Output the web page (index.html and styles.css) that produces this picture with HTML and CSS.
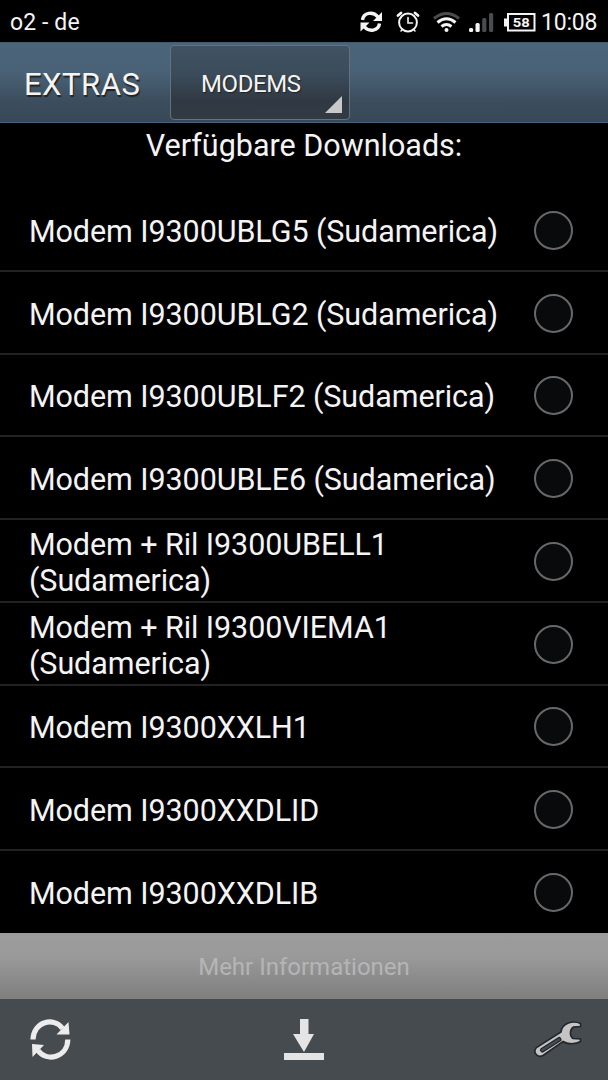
FILE: index.html
```html
<!DOCTYPE html>
<html lang="de">
<head>
    <meta charset="UTF-8">
    <meta name="viewport" content="width=device-width, initial-scale=1.0">
    <title>Extras</title>
    <link rel="stylesheet" href="styles.css">
</head>
<body>
    <div class="statusbar">
        <span class="carrier">o2 - de</span>
        <svg class="status-icons" width="178" height="42" viewBox="358 0 178 42">
            <!-- Sync -->
            <g fill="none" stroke="#f4f4f4" stroke-width="3.4">
                <path d="M362.5 20C363.5 12.5 373 11 378 17"/>
                <path d="M379.5 23.500C378.500 31 369 32.500 364 26.500"/>
            </g>
            <path d="M382 12V21H373zM360.500 31.500V22.500H369.500z" fill="#f4f4f4"/>
            <!-- Alarm -->
            <g fill="none" stroke="#f4f4f4" stroke-linecap="round">
                <circle cx="408" cy="22.500" r="8.900" stroke-width="2"/>
                <path d="M408 17.500V23H412.500" stroke-width="1.600"/>
                <path d="M398 15.500L401 13M418 15.500L415 13" stroke-width="2.800"/>
                <path d="M402.500 29.500L401 31M413.500 29.500L415 31" stroke-width="1.600"/>
            </g>
            <!-- Wifi -->
            <g fill="none" stroke-width="3">
                <path d="M434 18.500Q446.500 8.500 459 18.500" stroke="#4a4c4e"/>
                <path d="M437.500 22.500Q446.500 15 455.500 22.500" stroke="#f4f4f4"/>
                <path d="M441.500 26.500Q446.500 22.500 451.500 26.500" stroke="#f4f4f4"/>
            </g>
            <circle cx="446.500" cy="30" r="2" fill="#f4f4f4"/>
            <!-- Signal -->
            <rect x="469" y="28" width="4.200" height="4" rx="1.500" fill="#f4f4f4"/>
            <rect x="475.500" y="23" width="4.200" height="9" rx="1.500" fill="#f4f4f4"/>
            <rect x="482.200" y="18" width="4.200" height="14" rx="1.500" fill="#4a4c4e"/>
            <rect x="489" y="13" width="4.200" height="19" rx="1.500" fill="#4a4c4e"/>
            <!-- Battery -->
            <path d="M504 18.500H507V26.500H504z" fill="#f4f4f4"/>
            <rect x="508" y="14" width="26.500" height="16.500" fill="none" stroke="#f4f4f4" stroke-width="2"/>
            <text class="battery-level" x="521.200" y="27" text-anchor="middle" textLength="17" lengthAdjust="spacingAndGlyphs">58</text>
        </svg>
        <span class="clock">10:08</span>
    </div>

    <header>
        <h1>EXTRAS</h1>
        <div class="spinner">
            <span>MODEMS</span>
            <svg class="corner" width="17" height="17" viewBox="0 0 17 17"><path d="M17 0V17H0z" fill="#c8c8c8"/></svg>
        </div>
    </header>

    <main>
        <h2>Verfügbare Downloads:</h2>
        <ul class="downloads">
            <li><span class="name">Modem I9300UBLG5 (Sudamerica)</span><span class="radio"></span></li>
            <li><span class="name">Modem I9300UBLG2 (Sudamerica)</span><span class="radio"></span></li>
            <li><span class="name">Modem I9300UBLF2 (Sudamerica)</span><span class="radio"></span></li>
            <li><span class="name">Modem I9300UBLE6 (Sudamerica)</span><span class="radio"></span></li>
            <li><span class="name">Modem + Ril I9300UBELL1 (Sudamerica)</span><span class="radio"></span></li>
            <li><span class="name">Modem + Ril I9300VIEMA1 (Sudamerica)</span><span class="radio"></span></li>
            <li><span class="name">Modem I9300XXLH1</span><span class="radio"></span></li>
            <li><span class="name">Modem I9300XXDLID</span><span class="radio"></span></li>
            <li><span class="name">Modem I9300XXDLIB</span><span class="radio"></span></li>
        </ul>
    </main>

    <button class="more" disabled>Mehr Informationen</button>

    <footer>
        <svg width="44" height="44" viewBox="28 1018 44 44">
            <g fill="none" stroke="#ececec" stroke-width="5.200">
                <path d="M33 1039.500C33.500 1021.500 54 1016.500 62.500 1028.500"/>
                <path d="M67.800 1039.500C67.500 1057.500 46.500 1062.500 38 1050.500"/>
            </g>
            <path d="M68.500 1022L69.500 1034.500L56.500 1034.500zM32 1044L44 1045L32.500 1057z" fill="#ececec"/>
        </svg>
        <svg class="download" width="44" height="44" viewBox="282 1018 44 44">
            <path d="M300 1019H308.500V1034H314L304 1052L293 1034H300z" fill="#e4e4e4"/>
            <rect x="284" y="1053" width="40" height="7" fill="#e4e4e4"/>
        </svg>
        <svg width="52" height="44" viewBox="532 1018 52 44">
            <path d="M561 1032C562 1023 573 1020 580.500 1023.500V1026.500L573.500 1027C569.500 1030 569.500 1036 573 1038.500L580.500 1039V1041.500C576 1044.500 567 1044.500 563 1041.500L543 1055.500C537 1058.500 532.500 1052 536.500 1047.500z" fill="#c4c4c4" stroke="#23272b" stroke-width="1.600"/>
            <path d="M542.500 1050L559 1039.500" stroke="#23272b" stroke-width="5" stroke-linecap="round"/>
            <path d="M542.500 1050L559 1039.500" stroke="#464b4f" stroke-width="2.500" stroke-linecap="round"/>
        </svg>
    </footer>
</body>
</html>
```
FILE: styles.css
```css
* {
    margin: 0;
    padding: 0;
    box-sizing: border-box;
}

body {
    display: flex;
    flex-direction: column;
    height: 1080px;
    overflow: hidden;
    font-family: Roboto, sans-serif;
    background-color: #000;
    color: #f4f4f4;
}

/* Status bar */
.statusbar {
    display: flex;
    align-items: center;
    height: 42px;
    padding: 0 10px;
    font-size: 23px;
}

.carrier {
    padding-top: 2px;
    letter-spacing: 0.1px;
}

.status-icons {
    margin-left: auto;
}

.battery-level {
    font: bold 13px Roboto, sans-serif;
    fill: #f4f4f4;
}

.clock {
    width: 57px;
    margin-left: 5px;
    padding-top: 3px;
    font-size: 23px;
    letter-spacing: -0.2px;
    white-space: nowrap;
}

/* Action bar */
header {
    display: flex;
    align-items: center;
    height: 81px;
    padding-left: 24px;
    background: linear-gradient(#4a647a, #4a6277 35%, #3b4d5d 75%, #384857);
    border-top: 1px solid #415a6e;
    border-bottom: 1px solid #46627c;
}

h1 {
    width: 146px;
    padding-top: 3px;
    font-size: 31px;
    font-weight: normal;
    letter-spacing: 0.5px;
    text-shadow: 1px 2px 1px #222;
}

.spinner {
    display: flex;
    align-items: center;
    position: relative;
    width: 180px;
    height: 75px;
    padding: 2px 0 0 30px;
    font-size: 24px;
    letter-spacing: -0.4px;
    background: linear-gradient(#3f5364, #3b4b59 40%, #303943 75%, #323a43);
    border: 1px solid #65717b;
    border-radius: 4px;
    text-shadow: 1px 1px 1px #222;
}

.corner {
    position: absolute;
    right: 7px;
    bottom: 6px;
}

/* Download list */
main {
    height: 810px;
}

h2 {
    height: 66px;
    padding-top: 5px;
    font-size: 30.500px;
    font-weight: normal;
    line-height: 36px;
    text-align: center;
}

.downloads {
    list-style-type: none;
}

.downloads li {
    display: flex;
    align-items: center;
    justify-content: space-between;
    height: 82.750px;
    padding: 2px 35px 0 29px;
    border-bottom: 2px solid #222;
}

.downloads li:last-child {
    border-bottom-color: #000;
}

.name {
    width: 485px;
    padding-top: 3px;
    font-size: 30.500px;
    letter-spacing: -0.080px;
    line-height: 36px;
}

.radio {
    width: 39px;
    height: 39px;
    background-color: #090a0c;
    border: 2px solid #66686a;
    border-radius: 50%;
}

/* Bottom */
.more {
    height: 66px;
    padding-top: 2px;
    border: none;
    font-family: inherit;
    font-size: 24px;
    color: #b5b5b5;
    background: linear-gradient(#9c9c9c, #9a9a9a 35%, #828282 90%, #808080);
}

footer {
    display: flex;
    align-items: center;
    height: 81px;
    padding: 0 24px 0 28px;
    background-color: #464b4f;
}

.download {
    margin: 0 206px 0 210px;
}
```
